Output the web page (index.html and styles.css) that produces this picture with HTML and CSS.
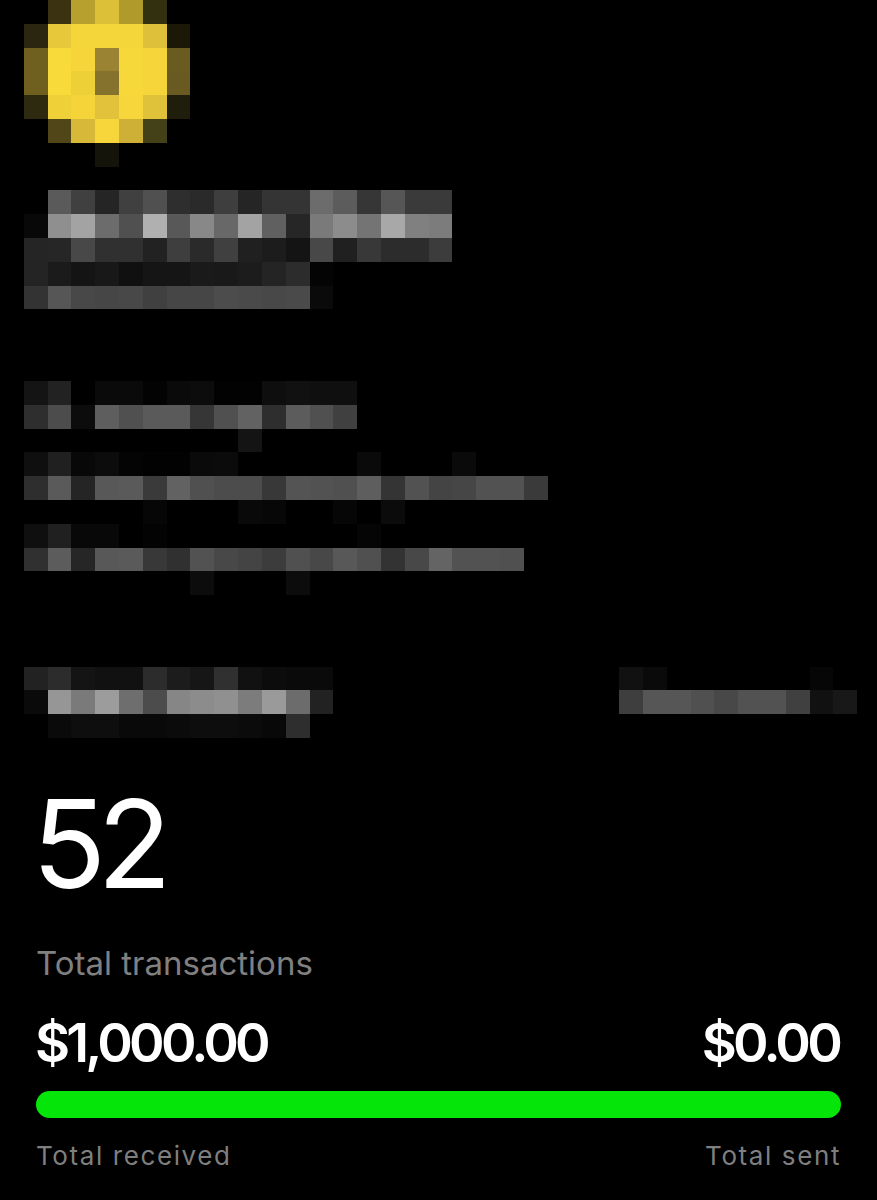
FILE: index.html
```html
<!doctype html>
<html lang="en">
<head>
  <meta charset="utf-8">
  <meta name="viewport" content="width=device-width, initial-scale=1.0">
  <title>Transactions</title>
  <link rel="stylesheet" href="styles.css">
</head>
<body>

<div class="mosaic">
  <canvas id="mosaic" width="37" height="31"></canvas>
</div>

<main class="summary">
  <div class="count">52</div>
  <div class="count-label">Total transactions</div>

  <div class="amounts">
    <span>$1,000.00</span>
    <span>$0.00</span>
  </div>

  <div class="bar"></div>

  <div class="bar-labels">
    <span>Total received</span>
    <span>Total sent</span>
  </div>
</main>

<script src="mosaic.js"></script>
</body>
</html>
```

FILE: styles.css
```css
body {
  margin: 0;
  background: #000;
  color: #fff;
  font-family: Inter, "Liberation Sans", sans-serif;
  overflow: hidden;
}

.mosaic {
  height: 738px;
  overflow: hidden;
}

#mosaic {
  display: block;
  width: 880.6px;
  height: 737.8px;
  image-rendering: pixelated;
}

.summary {
  padding: 0 36px;
}

.count {
  margin-top: 41px;
  margin-left: -4px;
  font-size: 122px;
  font-weight: 400;
  line-height: 130px;
  letter-spacing: -9px;
}

.count-label {
  margin-top: 34px;
  font-size: 33px;
  line-height: 40px;
  color: #808080;
}

.amounts {
  display: flex;
  justify-content: space-between;
  margin: 30px 0 0 -1px;
  padding-right: 2px;
  font-size: 54px;
  font-weight: 600;
  line-height: 60px;
  letter-spacing: -3.8px;
}

.bar {
  height: 27px;
  margin-top: 18px;
  border-radius: 14px;
  background: #05e50a;
}

.bar-labels {
  display: flex;
  justify-content: space-between;
  margin-top: 20px;
  font-size: 26px;
  line-height: 36px;
  letter-spacing: 1.6px;
  color: #7f7f7f;
}
```

FILE: mosaic.js
```js
// [row, first column, colours...] one entry per run of blurred cells
const runs = [
  [0, 2, '#3a3210', '#b8a02e', '#dcc038', '#b09a2c', '#333010'],
  [1, 1, '#2a2610', '#e6c83a', '#f5d63a', '#f5d63a', '#f5d63a', '#dfc03a', '#1c1808'],
  [2, 1, '#6f6020', '#f8da3a', '#f5d53a', '#9a8434', '#f7d83a', '#f5d53a', '#6a5c20'],
  [3, 1, '#706020', '#f8da3a', '#edd038', '#85722c', '#f7d83a', '#f5d53a', '#685a20'],
  [4, 1, '#2e2a10', '#f0d038', '#f5d43a', '#e2c23a', '#f6d63a', '#e0c23a', '#1f1e0c'],
  [5, 2, '#504618', '#d8b838', '#f6d63a', '#cfb036', '#444018'],
  [6, 4, '#14140a'],

  [8, 2, 0x5a, 0x40, 0x25, 0x40, 0x50, 0x2e, 0x2a, 0x3e, 0x25, 0x34, 0x34, 0x6c, 0x5c, 0x36, 0x56, 0x3a, 0x3a],
  [9, 1, 0x08, 0x8f, 0xa3, 0x6c, 0x50, 0xb0, 0x58, 0x88, 0x68, 0xa3, 0x60, 0x26, 0x7a, 0x8c, 0x74, 0xa8, 0x80, 0x7c],
  [10, 1, 0x25, 0x26, 0x48, 0x30, 0x30, 0x22, 0x3e, 0x2a, 0x40, 0x20, 0x1c, 0x14, 0x48, 0x20, 0x38, 0x2c, 0x2c, 0x3c],
  [11, 1, 0x24, 0x1b, 0x14, 0x18, 0x10, 0x15, 0x15, 0x1a, 0x19, 0x1c, 0x24, 0x2c, 0x04],
  [12, 1, 0x33, 0x56, 0x48, 0x46, 0x48, 0x40, 0x46, 0x46, 0x4c, 0x4a, 0x48, 0x4a, 0x0a],

  [16, 1, 0x14, 0x22, 0x00, 0x0a, 0x0a, 0x03, 0x0a, 0x0c, 0x02, 0x02, 0x0e, 0x11, 0x0f, 0x0f],
  [17, 1, 0x2e, 0x4c, 0x0c, 0x5e, 0x50, 0x5a, 0x5a, 0x36, 0x50, 0x62, 0x2e, 0x5c, 0x50, 0x40],
  [18, 10, 0x14],
  [19, 1, 0x0f, 0x20, 0x08, 0x0c, 0x04, 0x02, 0x02, 0x0a, 0x0b],
  [19, 15, 0x0a],
  [19, 19, 0x0a],
  [20, 1, 0x2e, 0x5a, 0x25, 0x58, 0x5a, 0x3a, 0x62, 0x50, 0x4c, 0x4c, 0x38, 0x54, 0x52, 0x50, 0x5e, 0x34, 0x52, 0x44, 0x46, 0x52, 0x52, 0x3a],
  [21, 6, 0x06],
  [21, 10, 0x09, 0x07],
  [21, 14, 0x06],
  [21, 16, 0x0b],
  [22, 1, 0x0f, 0x20, 0x08, 0x08, 0x00, 0x03],
  [22, 15, 0x05],
  [23, 1, 0x30, 0x5c, 0x26, 0x58, 0x5a, 0x38, 0x30, 0x52, 0x48, 0x44, 0x3c, 0x50, 0x48, 0x58, 0x50, 0x33, 0x48, 0x64, 0x52, 0x52, 0x50],
  [24, 8, 0x0c],
  [24, 12, 0x0c],

  [28, 1, 0x22, 0x2c, 0x14, 0x11, 0x11, 0x2c, 0x1c, 0x16, 0x30, 0x11, 0x0c, 0x0a, 0x0a],
  [28, 26, 0x11, 0x0a],
  [28, 34, 0x06],
  [29, 1, 0x0a, 0x96, 0x7a, 0x9c, 0x6e, 0x4c, 0x86, 0x8c, 0x90, 0x7c, 0x9a, 0x6c, 0x22],
  [29, 26, 0x3e, 0x56, 0x56, 0x50, 0x48, 0x52, 0x52, 0x40, 0x11, 0x18],
  [30, 2, 0x0a, 0x0e, 0x0e, 0x09, 0x09, 0x0b, 0x0d, 0x0d, 0x0b, 0x08, 0x2e],
];

const ctx = document.getElementById('mosaic').getContext('2d');

runs.forEach(([row, col, ...cells]) => {
  cells.forEach((c, i) => {
    ctx.fillStyle = typeof c === 'string' ? c : `rgb(${c},${c},${c})`;
    ctx.fillRect(col + i, row, 1, 1);
  });
});
```
